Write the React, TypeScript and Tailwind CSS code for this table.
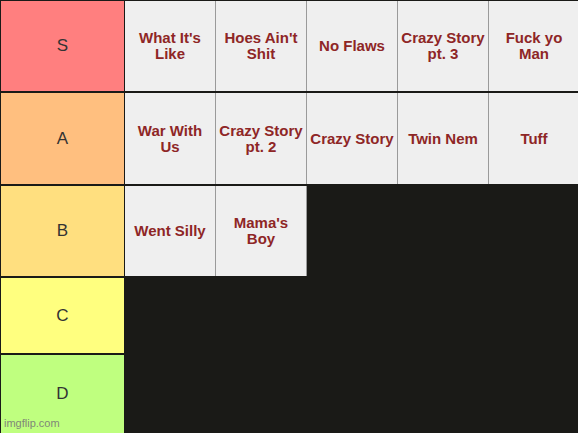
import React from "react";

type Row = { label: string; color: string; h: string; items: string[] };

const rows: Row[] = [
  { label: "S", color: "bg-[#ff7f7f]", h: "h-[90px]", items: ["What It's Like", "Hoes Ain't Shit", "No Flaws", "Crazy Story pt. 3", "Fuck yo Man"] },
  { label: "A", color: "bg-[#ffbf7f]", h: "h-[91px]", items: ["War With Us", "Crazy Story pt. 2", "Crazy Story", "Twin Nem", "Tuff"] },
  { label: "B", color: "bg-[#ffdf7f]", h: "h-[90px]", items: ["Went Silly", "Mama's Boy"] },
  { label: "C", color: "bg-[#ffff7f]", h: "h-[75px]", items: [] },
  { label: "D", color: "bg-[#bfff7f]", h: "h-[78px]", items: [] },
];

export default function App() {
  return (
    <div
      className="relative w-[578px] h-[433px] overflow-hidden bg-[#1a1a17] pt-[1px] pl-[1px] flex flex-col gap-[2px]"
      style={{ fontFamily: '"Liberation Sans", Arial, sans-serif' }}
    >
      {rows.map((r) => (
        <div key={r.label} className={`flex shrink-0 ${r.h}`}>
          <div className={`w-[123px] shrink-0 ${r.color} flex items-center justify-center text-[17px] text-[#333]`}>
            {r.label}
          </div>
          <div className="w-[1px] shrink-0" />
          <div className="flex">
            {r.items.map((it) => (
              <div
                key={it}
                className="w-[91px] shrink-0 bg-[#efefef] border-r border-[#9a9a9a] flex items-center justify-center px-[3px] text-center font-bold text-[15px] leading-[16px] text-[#8e2626]"
              >
                {it}
              </div>
            ))}
          </div>
        </div>
      ))}
      <div className="absolute left-[4px] bottom-[3px] text-[11px] leading-[13px] text-[#7f8778]">imgflip.com</div>
    </div>
  );
}
